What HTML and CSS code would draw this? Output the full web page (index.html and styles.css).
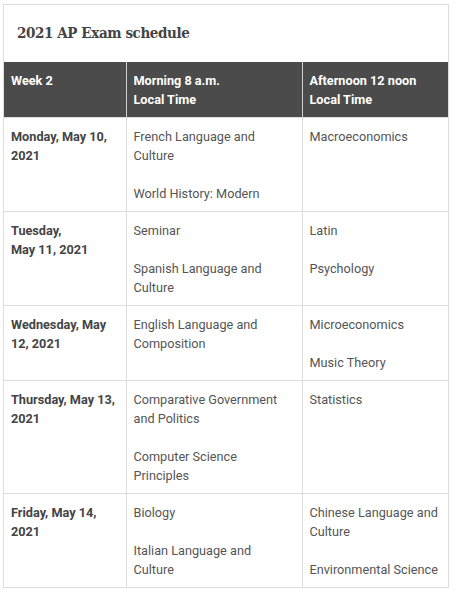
FILE: index.html
```html
<!DOCTYPE html>
<html>
<head>
<meta charset="utf-8">
<link rel="stylesheet" href="styles.css">
</head>
<body>
<div class="schedule">
  <h2 class="title">2021 AP Exam schedule</h2>
  <table class="grid">
    <colgroup>
      <col class="c1"><col class="c2"><col class="c3">
    </colgroup>
    <thead>
      <tr>
        <th>Week 2</th>
        <th>Morning 8 a.m.<br>Local Time</th>
        <th>Afternoon 12 noon<br>Local Time</th>
      </tr>
    </thead>
    <tbody>
      <tr>
        <td class="day">Monday, May 10, 2021</td>
        <td><p>French Language and Culture</p><p>World History: Modern</p></td>
        <td><p>Macroeconomics</p></td>
      </tr>
      <tr>
        <td class="day">Tuesday,<br>May 11, 2021</td>
        <td><p>Seminar</p><p>Spanish Language and Culture</p></td>
        <td><p>Latin</p><p>Psychology</p></td>
      </tr>
      <tr>
        <td class="day">Wednesday, May 12, 2021</td>
        <td><p>English Language and Composition</p></td>
        <td><p>Microeconomics</p><p>Music Theory</p></td>
      </tr>
      <tr>
        <td class="day">Thursday, May 13, 2021</td>
        <td><p>Comparative Government and Politics</p><p>Computer Science Principles</p></td>
        <td><p>Statistics</p></td>
      </tr>
      <tr>
        <td class="day">Friday, May 14, 2021</td>
        <td><p>Biology</p><p>Italian Language and Culture</p></td>
        <td><p>Chinese Language and Culture</p><p>Environmental Science</p></td>
      </tr>
    </tbody>
  </table>
</div>
</body>
</html>
```
FILE: styles.css
```css
html, body {
  margin: 0;
  padding: 0;
  background: #fff;
}
body {
  font-family: Roboto, "Liberation Sans", sans-serif;
}
.schedule {
  margin: 4px 0 0 3px;
  width: 444px;
  border: 1px solid #dcdcdc;
}
.title {
  margin: 0;
  height: 57px;
  box-sizing: border-box;
  padding: 18px 0 0 13px;
  font-family: "DejaVu Serif", serif;
  font-stretch: condensed;
  font-weight: bold;
  font-size: 15px;
  letter-spacing: -0.4px;
  line-height: 20px;
  color: #444;
}
.grid {
  width: 444px;
  border-collapse: collapse;
  table-layout: fixed;
}
.c1 { width: 122px; }
.c2 { width: 176px; }
.c3 { width: 146px; }
.grid th,
.grid td {
  padding: 9px 7px 8px;
  font-size: 12.7px;
  line-height: 19px;
  text-align: left;
  vertical-align: top;
  border-left: 1px solid #dcdcdc;
}
.grid th {
  padding-bottom: 8px;
}
.grid th:first-child,
.grid td:first-child {
  border-left: none;
}
.grid th {
  background: #4b4b4b;
  color: #fff;
  font-weight: bold;
  border-left-color: #cfcfcf;
}
.grid td {
  color: #555;
  border-top: 1px solid #dcdcdc;
}
.grid td.day {
  font-weight: bold;
  color: #444;
}
.grid p {
  margin: 0 0 19px;
}
.grid p:last-child {
  margin-bottom: 0;
}
```
